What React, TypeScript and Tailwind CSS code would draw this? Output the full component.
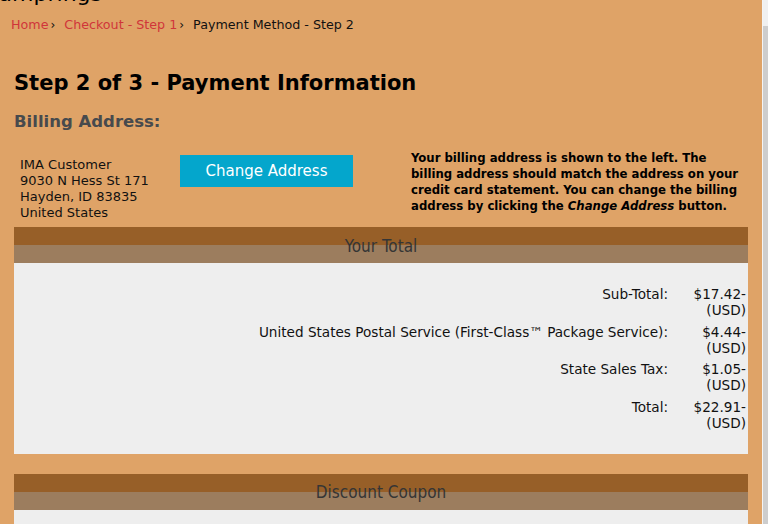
import React from "react";

const verdana = "font-['DejaVu_Sans','Verdana',sans-serif]";
const condensed = "font-['DejaVu_Sans_Condensed','DejaVu_Sans',sans-serif] [font-stretch:condensed]";

function PanelHeader({ title }: { title: string }) {
  return (
    <div className="relative">
      <div className="h-[18px] bg-[#975f28]" />
      <div className="h-[18px] bg-[#9c7d5e]" />
      <div className={`absolute inset-0 flex items-center justify-center pt-[3px] text-[17px] text-[#353535] ${condensed}`}>
        {title}
      </div>
    </div>
  );
}

const totals = [
  { label: "Sub-Total:", amount: "$17.42-" },
  { label: "United States Postal Service (First-Class™ Package Service):", amount: "$4.44-" },
  { label: "State Sales Tax:", amount: "$1.05-" },
  { label: "Total:", amount: "$22.91-" },
];

export default function App() {
  return (
    <div className={`flex h-[524px] w-[768px] overflow-hidden ${verdana} text-[13px] text-[#111]`}>
      <div className="w-[762px] shrink-0 bg-[#dfa367]">
        <div className="h-[6px] overflow-hidden">
          <div className="-mt-[19px] -ml-[24px] text-[22px] leading-[26px] text-black">Stamprings</div>
        </div>
        <div className="mt-[10px] ml-[11px] flex items-center text-[12.7px] leading-[18px]">
          <span className="text-[#d0353a]">Home</span>
          <span className="ml-[2px] mr-[9px] text-[12px]">›</span>
          <span className="text-[#d0353a]">Checkout - Step 1</span>
          <span className="ml-[2px] mr-[9px] text-[12px]">›</span>
          <span>Payment Method - Step 2</span>
        </div>
        <h1 className="mt-[36px] ml-[14px] text-[21px] font-bold leading-[26px] text-black">
          Step 2 of 3 - Payment Information
        </h1>
        <h2 className="mt-[16px] ml-[14px] text-[16.5px] font-bold leading-[20px] text-[#474a4d]">Billing Address:</h2>
        <div className="mt-[18px] flex h-[77px]">
          <div className="ml-[20px] mt-[7px] w-[160px] leading-[16px]">
            <div>IMA Customer</div>
            <div>9030 N Hess St 171</div>
            <div>Hayden, ID 83835</div>
            <div>United States</div>
          </div>
          <div className="mt-[5px]">
            <button className="flex h-[32px] w-[173px] items-center justify-center bg-[#04a6cc] text-[15px] text-white">
              Change Address
            </button>
          </div>
          <div className={`ml-[58px] mt-0 w-[330px] text-[13px] font-bold leading-[16px] text-black ${condensed}`}>
            Your billing address is shown to the left. The billing address should match the address on your credit card
            statement. You can change the billing address by clicking the <i>Change Address</i> button.
          </div>
        </div>
        <div className="mx-[14px]">
          <PanelHeader title="Your Total" />
          <div className="bg-[#eeeeee] pt-[23px] pb-[23px] pr-[2px] text-[13.6px]">
            <div className="flex flex-col gap-[5.5px] leading-[16px]">
              {totals.map((t) => (
                <div key={t.label} className="flex justify-end">
                  <div className="text-right">{t.label}</div>
                  <div className="w-[78px] text-right">
                    <div>{t.amount}</div>
                    <div>(USD)</div>
                  </div>
                </div>
              ))}
            </div>
          </div>
          <div className="h-[20px]" />
          <PanelHeader title="Discount Coupon" />
          <div className="h-[40px] bg-[#eeeeee]" />
        </div>
      </div>
      <div className="w-px shrink-0 bg-[#f4f4f4]" />
      <div className="flex flex-1 flex-col">
        <div className="h-[26px] bg-[#f0f0f0]" />
        <div className="flex-1 bg-[#cdcdcd]" />
      </div>
    </div>
  );
}
